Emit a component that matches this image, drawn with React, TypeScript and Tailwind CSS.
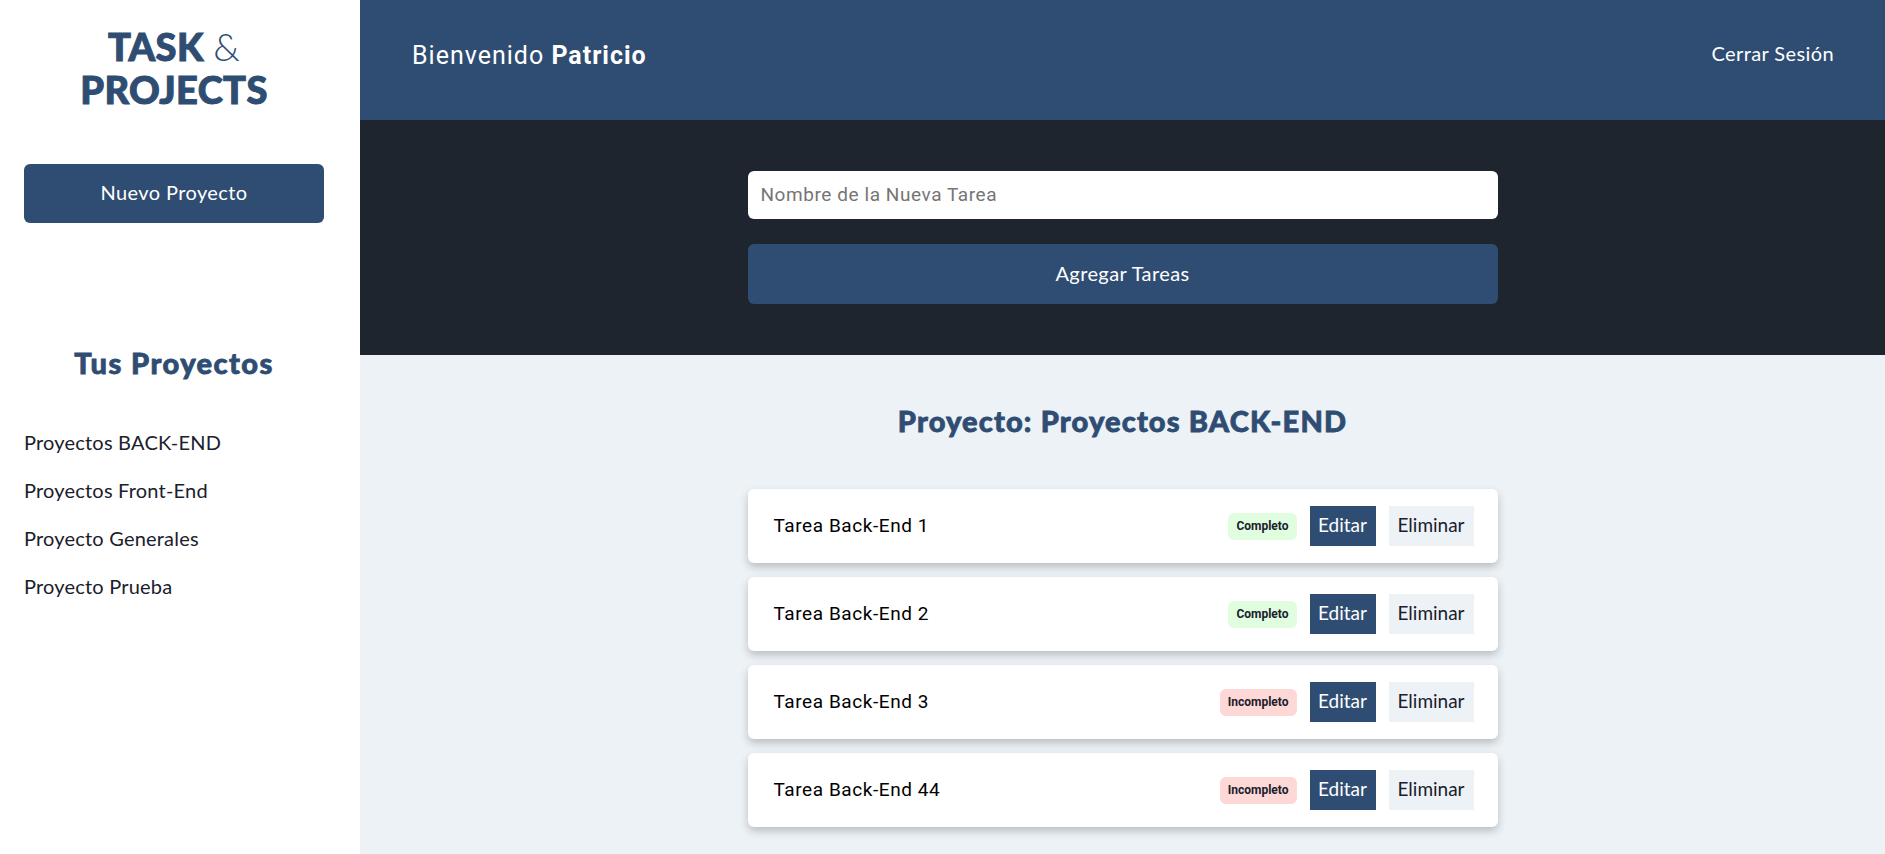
import React from 'react';

const blue = 'bg-[#2f4d72]';

const proyectos = ['Proyectos BACK-END', 'Proyectos Front-End', 'Proyecto Generales', 'Proyecto Prueba'];

const tareas = [
  { nombre: 'Tarea Back-End 1', estado: true },
  { nombre: 'Tarea Back-End 2', estado: true },
  { nombre: 'Tarea Back-End 3', estado: false },
  { nombre: 'Tarea Back-End 44', estado: false },
];

const Sidebar = () => (
  <aside className="w-[360px] shrink-0 bg-white pl-6 pt-[25px] font-['Lato',sans-serif]">
    <div className="w-[300px]">
      <h1 className="text-center text-[38px] leading-[43px] font-black text-[#2f4d72] tracking-[0.01em]">
        <span className="[-webkit-text-stroke:1px_#2f4d72]">TASK</span> <span className="font-light">&amp;</span>
        <br />
        <span className="[-webkit-text-stroke:1px_#2f4d72]">PROJECTS</span>
      </h1>
      <button className={`mt-[53px] w-[300px] h-[59px] pb-[3px] ${blue} rounded-md text-white text-[20px] tracking-[0.02em]`}>
        Nuevo Proyecto
      </button>
      <h2 className="mt-[123px] text-center text-[29px] leading-[34px] font-black tracking-[0.05em] text-[#2f4d72] [-webkit-text-stroke:0.8px_#2f4d72]">
        Tus Proyectos
      </h2>
      <ul className="mt-[38px]">
        {proyectos.map(p => (
          <li key={p} className="text-[20px] leading-[48px] tracking-[0.01em] text-[#1a202c]">{p}</li>
        ))}
      </ul>
    </div>
  </aside>
);

const TaskCard = ({ nombre, estado }: { nombre: string; estado: boolean }) => (
  <div className="h-[74px] bg-white rounded-md shadow-[0_4px_8px_rgba(0,0,0,0.22)] flex items-center pl-[26px] pr-6">
    <p className="flex-1 font-['Roboto',sans-serif] text-[19px] tracking-[0.03em] text-black">{nombre}</p>
    <span
      className={`h-[27px] px-2 rounded-md flex items-center font-['Roboto',sans-serif] font-bold text-[12px] text-[#1a202c] ${
        estado ? 'bg-[#e1fde0]' : 'bg-[#fed7d7]'
      }`}
    >
      {estado ? 'Completo' : 'Incompleto'}
    </span>
    <button className={`ml-[13px] w-[66px] h-10 pb-[2px] ${blue} text-white text-[19px] font-['Lato',sans-serif]`}>Editar</button>
    <button className="ml-[13px] w-[85px] h-10 pb-[2px] bg-[#edf2f7] text-[#1a202c] text-[19px] font-['Lato',sans-serif]">Eliminar</button>
  </div>
);

export default function App() {
  return (
    <div className="flex w-full h-[854px] overflow-hidden">
      <Sidebar />
      <main className="flex-1 flex flex-col bg-[#edf2f7]">
        <header className={`h-[120px] shrink-0 ${blue} flex items-center justify-between pl-[52px] pr-[51px] pb-2`}>
          <p className="font-['Roboto',sans-serif] text-[25px] tracking-[0.04em] text-white">
            Bienvenido <span className="font-bold">Patricio</span>
          </p>
          <a className="mb-[6px] font-['Lato',sans-serif] text-[20px] tracking-[0.02em] text-white">Cerrar Sesión</a>
        </header>

        <section className="h-[235px] shrink-0 bg-[#1e252e] flex flex-col items-center pt-[51px]">
          <input
            type="text"
            placeholder="Nombre de la Nueva Tarea"
            className="w-[750px] h-12 bg-white rounded-md px-[13px] pb-[2px] font-['Roboto',sans-serif] text-[19px] tracking-[0.03em] placeholder:text-[#757575] outline-none"
          />
          <button className={`mt-[25px] w-[750px] h-[60px] pb-[3px] ${blue} rounded-md text-white text-[20px] tracking-[0.02em] font-['Lato',sans-serif]`}>
            Agregar Tareas
          </button>
        </section>

        <section className="flex-1 flex flex-col items-center pt-[49px]">
          <h2 className="font-['Lato',sans-serif] text-[29px] leading-[34px] font-black tracking-[0.04em] text-[#2f4d72] [-webkit-text-stroke:0.8px_#2f4d72]">
            Proyecto: Proyectos BACK-END
          </h2>
          <div className="mt-[51px] w-[750px] flex flex-col gap-[14px]">
            {tareas.map(t => (
              <TaskCard key={t.nombre} nombre={t.nombre} estado={t.estado} />
            ))}
          </div>
        </section>
      </main>
    </div>
  );
}
